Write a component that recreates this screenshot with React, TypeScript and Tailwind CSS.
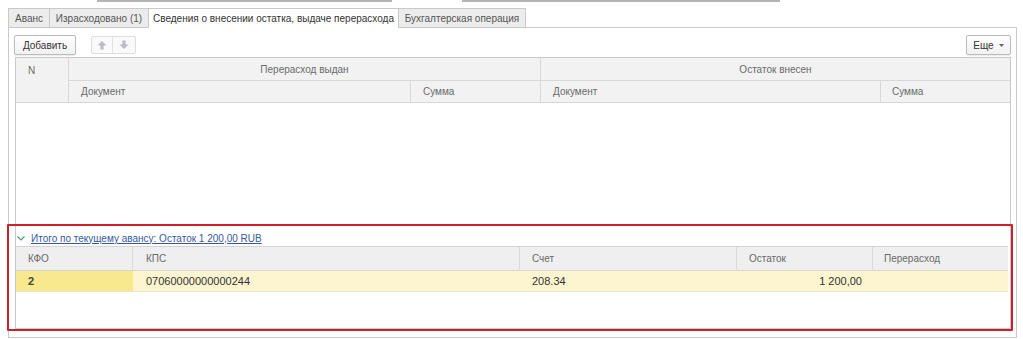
import React from "react";

const ArrowIcon = ({ down = false }: { down?: boolean }) => (
  <svg width="10" height="10" viewBox="0 0 10 10" className={down ? "rotate-180" : ""}>
    <path d="M5 1 L9.5 5.5 H6.6 V9.5 H3.4 V5.5 H0.5 Z" fill="#b9bec4" />
  </svg>
);

const tabs = [
  { label: "Аванс", w: "w-[41px]", active: false },
  { label: "Израсходовано (1)", w: "w-[99px]", active: false },
  { label: "Сведения о внесении остатка, выдаче перерасхода", w: "w-[250px]", active: true },
  { label: "Бухгалтерская операция", w: "w-[128px]", active: false },
];

const App = () => {
  return (
    <div className="relative w-[1023px] h-[339px] overflow-hidden bg-white font-['Liberation_Sans',Arial,sans-serif] text-[10px] text-[#4d4d4d]">
      {/* fragments of inputs above */}
      <div className="flex h-[2px]">
        <div className="ml-[97px] w-[295px] bg-[#b4b4b4]" />
        <div className="ml-[70px] w-[318px] bg-[#b4b4b4]" />
      </div>

      {/* tabs */}
      <div className="flex ml-[8px] mt-[6px] h-[19px] items-stretch">
        {tabs.map((t, i) => (
          <div
            key={t.label}
            className={
              "flex items-center justify-center whitespace-nowrap border-t border-l border-[#c9c9c9] " +
              t.w +
              (i === tabs.length - 1 ? " border-r" : "") +
              (t.active
                ? " relative z-10 h-[20px] bg-white text-[#333]"
                : " bg-[#ececec] text-[#555]")
            }
          >
            {t.label}
          </div>
        ))}
      </div>

      {/* panel */}
      <div className="ml-[8px] w-[1009px] h-[311px] border border-[#c9c9c9] bg-white pl-[6px] pt-[7px]">
        {/* toolbar */}
        <div className="flex items-center w-[996px] h-[20px] mb-[2px]">
          <div className="flex items-center justify-center w-[62px] h-[20px] -ml-px border border-[#bcbcbc] rounded-[2px] bg-gradient-to-b from-white to-[#f1f1f1] text-[#333] shadow-[0_1px_1px_rgba(0,0,0,0.08)]">
            Добавить
          </div>
          <div className="flex ml-[15px] h-[18px] border border-[#dedede] rounded-[2px] bg-[#fafafa]">
            <div className="flex items-center justify-center w-[21px] border-r border-[#e2e2e2]">
              <ArrowIcon />
            </div>
            <div className="flex items-center justify-center w-[22px]">
              <ArrowIcon down />
            </div>
          </div>
          <div className="ml-auto flex items-center justify-center gap-[5px] w-[45px] h-[20px] border border-[#bcbcbc] rounded-[2px] bg-gradient-to-b from-white to-[#f1f1f1] text-[#333] shadow-[0_1px_1px_rgba(0,0,0,0.08)]">
            <span>Еще</span>
            <svg width="5" height="3" viewBox="0 0 5 3">
              <path d="M0 0 H5 L2.5 3 Z" fill="#666" />
            </svg>
          </div>
        </div>

        {/* table frame */}
        <div className="flex flex-col w-[996px] h-[272px] border border-[#c9c9c9]">
          <div className="grid grid-cols-[53px_342px_130px_340px_1fr] grid-rows-[23px_22px] bg-[#f2f2f2] text-[#6a6a6a]">
            <div className="row-span-2 border-r border-b border-[#d8d8d8] pl-[12px] pt-[5px]">N</div>
            <div className="col-span-2 flex items-center justify-center border-r border-b border-[#d8d8d8]">
              Перерасход выдан
            </div>
            <div className="col-span-2 flex items-center justify-center border-b border-[#d8d8d8]">
              Остаток внесен
            </div>
            <div className="flex items-center pl-[12px] border-r border-b border-[#d8d8d8]">Документ</div>
            <div className="flex items-center pl-[12px] border-r border-b border-[#d8d8d8]">Сумма</div>
            <div className="flex items-center pl-[12px] border-r border-b border-[#d8d8d8]">Документ</div>
            <div className="flex items-center pl-[11px] border-b border-[#d8d8d8]">Сумма</div>
          </div>

          <div className="h-[127px]" />

          {/* group */}
          <div className="flex items-center h-[16px] pl-[1px]">
            <svg width="8" height="5" viewBox="0 0 8 5" className="mr-[6px]">
              <path d="M0.5 0.5 L4 4 L7.5 0.5" fill="none" stroke="#4e9a85" strokeWidth="1.2" />
            </svg>
            <span className="text-[#37599a] underline underline-offset-[1px]">
              Итого по текущему авансу: Остаток 1 200,00 RUB
            </span>
          </div>

          <div className="w-[992px]">
            <div className="grid grid-cols-[117px_387px_217px_136px_1fr] h-[25px] border-t border-b border-[#d4d4d4] bg-[#efefef] text-[#6a6a6a]">
              <div className="flex items-center pl-[12px] border-r border-[#dadada]">КФО</div>
              <div className="flex items-center pl-[13px] border-r border-[#dadada]">КПС</div>
              <div className="flex items-center pl-[12px] border-r border-[#dadada]">Счет</div>
              <div className="flex items-center pl-[12px] border-r border-[#dadada]">Остаток</div>
              <div className="flex items-center pl-[11px]">Перерасход</div>
            </div>
            <div className="grid grid-cols-[117px_387px_217px_136px_1fr] h-[21px] border-b border-[#ece6c6] bg-[#fcf5d0] text-[11px] text-[#333]">
              <div className="flex items-center pl-[12px] bg-[#f8e88e] font-bold text-[#444]">2</div>
              <div className="flex items-center pl-[13px]">07060000000000244</div>
              <div className="flex items-center pl-[12px]">208.34</div>
              <div className="flex items-center justify-end pr-[11px]">1 200,00</div>
              <div />
            </div>
          </div>
        </div>
      </div>

      {/* annotation frame */}
      <div className="absolute left-[7px] top-[224px] w-[1006px] h-[107px] border-2 border-[#cf1f2b] rounded-[1px]" />
    </div>
  );
};

export default App;
